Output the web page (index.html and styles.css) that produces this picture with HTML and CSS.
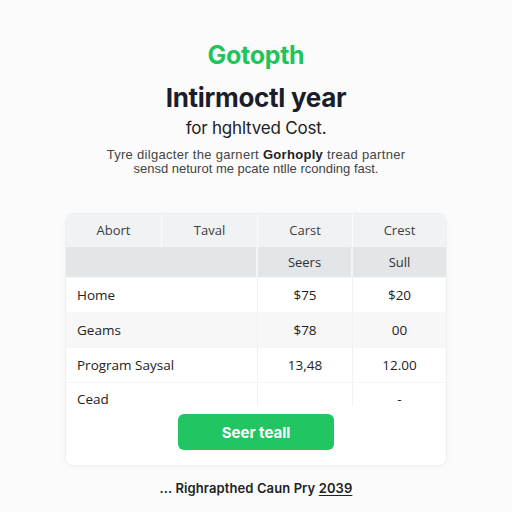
FILE: index.html
```html
<!DOCTYPE html>
<html>
<head>
<meta charset="utf-8">
<link rel="stylesheet" href="styles.css">
</head>
<body>
<main class="page">
  <div class="brand">Gotopth</div>
  <h1 class="title">Intirmoctl year</h1>
  <p class="subtitle">for hghltved Cost.</p>
  <p class="lead"><span class="wide">Tyre dilgacter the garnert <b>Gorhoply</b> tread partner</span><br>sensd neturot me pcate ntlle rconding fast.</p>

  <section class="card">
    <div class="grid">
      <div class="h1 c1">Abort</div>
      <div class="h1 c2">Taval</div>
      <div class="h1 c3">Carst</div>
      <div class="h1 c4">Crest</div>

      <div class="h2 span2"></div>
      <div class="h2 c3">Seers</div>
      <div class="h2 c4">Sull</div>

      <div class="cell name">Home</div>
      <div class="cell num c3">$75</div>
      <div class="cell num c4">$20</div>

      <div class="cell name alt">Geams</div>
      <div class="cell num c3 alt">$78</div>
      <div class="cell num c4 alt">00</div>

      <div class="cell name">Program Saysal</div>
      <div class="cell num c3">13,48</div>
      <div class="cell num c4">12.00</div>

      <div class="cell name last">Cead</div>
      <div class="cell num c3 last"></div>
      <div class="cell num c4 last">-</div>
    </div>
    <div class="actions">
      <button class="btn">Seer teall</button>
    </div>
  </section>

  <p class="footer">... Righrapthed Caun Pry <u>2039</u></p>
</main>
</body>
</html>
```
FILE: styles.css
```css
html, body {
  margin: 0;
  padding: 0;
  background: #fbfbfb;
}
.page {
  width: 512px;
  height: 512px;
  overflow: hidden;
  display: flex;
  flex-direction: column;
  align-items: center;
  padding-top: 40px;
  box-sizing: border-box;
  font-family: Inter, "Liberation Sans", sans-serif;
  color: #1b1e2a;
}
.brand {
  font-size: 25px;
  line-height: 30px;
  font-weight: 700;
  color: #1fc45c;
  letter-spacing: -0.3px;
}
.title {
  margin: 12px 0 0;
  font-size: 26px;
  line-height: 32px;
  font-weight: 700;
  color: #1a1d2b;
  letter-spacing: -0.3px;
}
.subtitle {
  margin: 3px 0 0;
  font-size: 17px;
  line-height: 22px;
  color: #222;
  letter-spacing: -0.2px;
}
.lead {
  margin: 9px 0 0;
  font-family: "Liberation Sans", Arial, sans-serif;
  font-size: 13px;
  line-height: 14px;
  color: #444;
  text-align: center;
}
.lead .wide { letter-spacing: 0.3px; }
.lead b { color: #222; }

.card {
  margin-top: 37px;
  width: 380px;
  background: #fff;
  border: 1px solid #f0f0f0;
  border-radius: 8px;
  box-shadow: 0 1px 6px rgba(0,0,0,0.03);
  padding-bottom: 15px;
  overflow: hidden;
  font-family: "Open Sans", sans-serif;
}
.grid {
  display: grid;
  grid-template-columns: 96px 96px 95px 1fr;
}
.h1 {
  height: 33px;
  line-height: 33px;
  background: #f1f2f3;
  text-align: center;
  font-size: 13px;
  color: #3a3d42;
  border-right: 1px solid #fbfbfc;
}
.h1.c4, .h2.c4 { border-right: none; }
.h2 {
  height: 30px;
  line-height: 30px;
  background: #e3e6e9;
  text-align: center;
  font-size: 13px;
  color: #2d3036;
  border-right: 2px solid #f4f5f6;
}
.span2 { grid-column: span 2; }
.cell {
  height: 34px;
  line-height: 34px;
  font-size: 13.5px;
  color: #222;
  border-top: 1px solid #f6f6f6;
}
.cell.name {
  grid-column: span 2;
  padding-left: 11px;
  border-right: 1px solid #f1f1f1;
}
.cell.num {
  text-align: center;
}
.cell.c3 { border-right: 1px solid #f1f1f1; }
.alt { background: #f7f7f7; }
.cell.last {
  height: 24px;
  line-height: 16px;
  padding-top: 8px;
  box-sizing: border-box;
}
.actions {
  display: flex;
  justify-content: center;
  margin-top: 8px;
}
.btn {
  width: 156px;
  height: 36px;
  border: none;
  border-radius: 6px;
  background: #21c562;
  color: #fff;
  font-family: Inter, "Liberation Sans", sans-serif;
  font-size: 15px;
  font-weight: 700;
}
.footer {
  margin: 14px 0 0;
  font-size: 13px;
  font-weight: 600;
  color: #222;
  letter-spacing: 0.1px;
}
.footer u {
  text-decoration-thickness: 1px;
  text-underline-offset: 2px;
}
```
